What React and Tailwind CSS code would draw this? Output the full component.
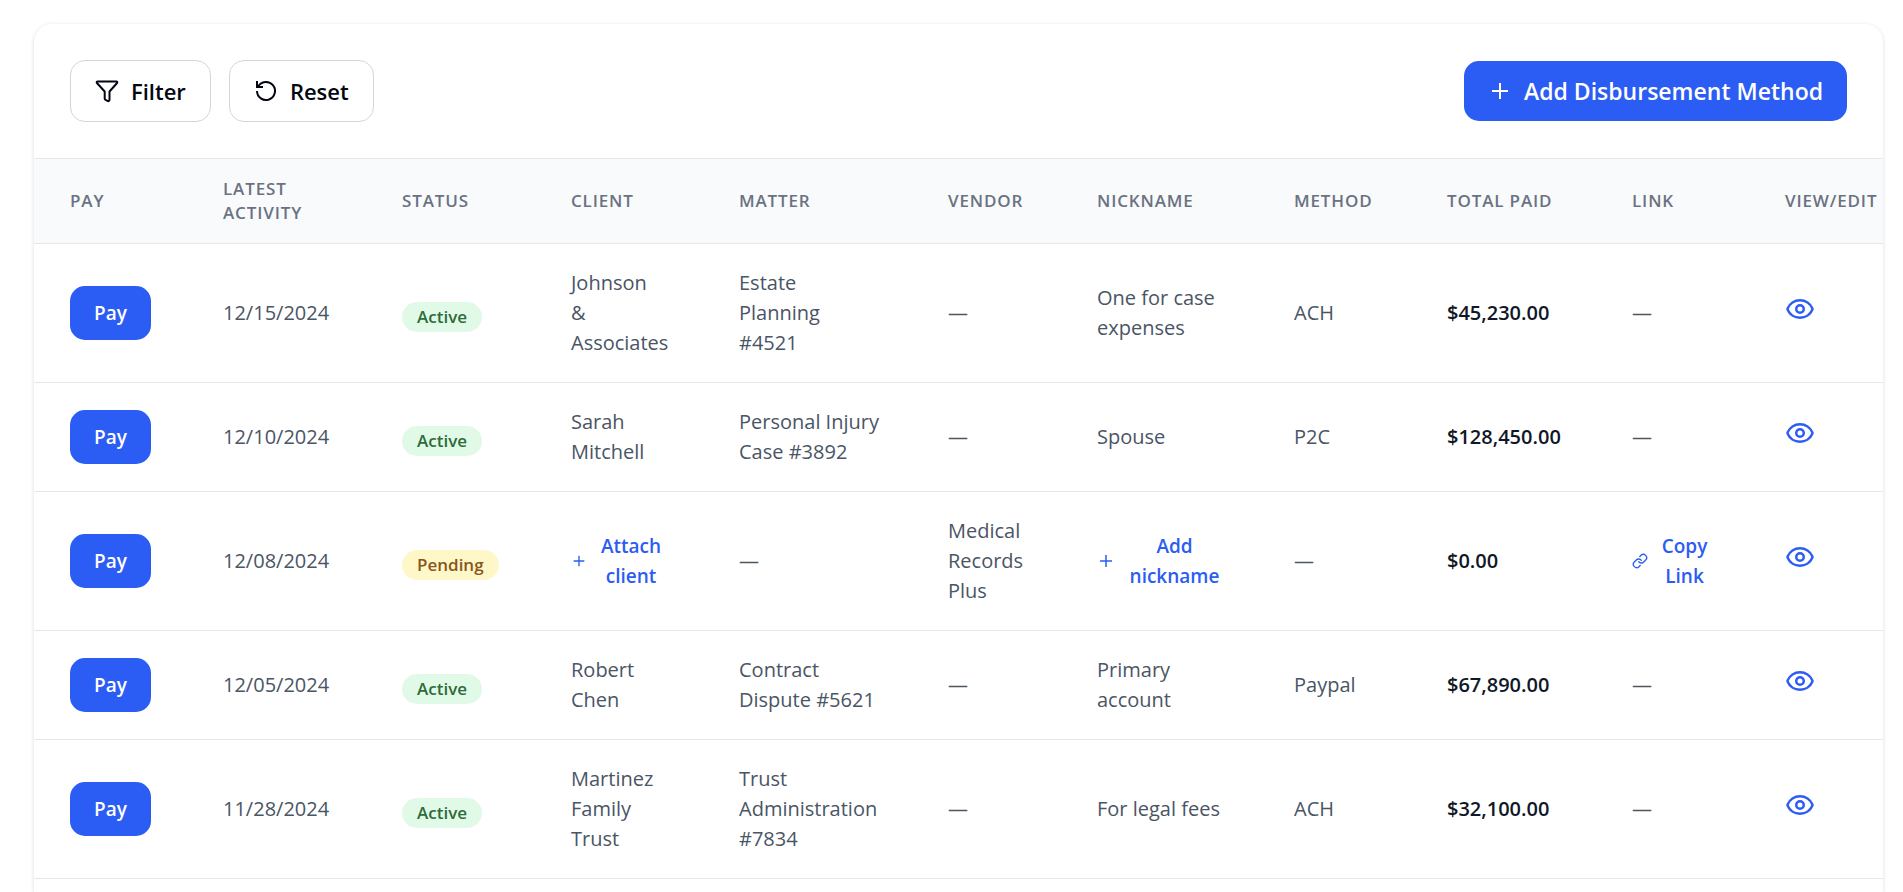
import React from "react";
import { Eye } from "lucide-react";

const PlusIcon = ({ className }) => (
  <svg viewBox="0 0 24 24" fill="none" stroke="currentColor" strokeWidth="2" className={className}>
    <path d="M12 4v16M4 12h16" />
  </svg>
);

const FilterIcon = () => (
  <svg viewBox="0 0 24 24" fill="none" stroke="currentColor" strokeWidth="2" strokeLinejoin="round" className="h-6 w-6">
    <path d="M2.6 2.5h18.8c.8 0 1.2.9.7 1.5L14.500 12.500v8.200a1.300 1.300 0 0 1-2 1.200l-2-1a1.500 1.500 0 0 1-.8-1.300v-7.100L1.900 4c-.5-.6-.1-1.500.7-1.500z" />
  </svg>
);

const ResetIcon = () => (
  <svg viewBox="0 0 24 24" fill="none" stroke="currentColor" strokeWidth="2" className="h-6 w-6">
    <path d="M3 2v6h6" />
    <path d="M4.200 7.500A9 9 0 1 1 3 12" />
  </svg>
);

const LinkIcon = ({ className }) => (
  <svg viewBox="0 0 24 24" fill="none" stroke="currentColor" strokeWidth="2" strokeLinecap="round" className={className}>
    <path d="M10 13a5 5 0 0 0 7.540.540l3-3a5 5 0 0 0-7.070-7.070l-1.720 1.710" />
    <path d="M14 11a5 5 0 0 0-7.540-.540l-3 3a5 5 0 0 0 7.070 7.070l1.710-1.710" />
  </svg>
);

const columns = [
  { label: "Pay", width: "w-[153px]" },
  { label: "Latest Activity", width: "w-[179px]" },
  { label: "Status", width: "w-[169px]" },
  { label: "Client", width: "w-[168px]" },
  { label: "Matter", width: "w-[209px]" },
  { label: "Vendor", width: "w-[149px]" },
  { label: "Nickname", width: "w-[197px]" },
  { label: "Method", width: "w-[153px]" },
  { label: "Total Paid", width: "w-[185px]" },
  { label: "Link", width: "w-[153px]" },
  { label: "View/Edit", width: "" },
];

const rows = [
  {
    date: "12/15/2024",
    status: "Active",
    client: "Johnson & Associates",
    matter: "Estate Planning #4521",
    nickname: "One for case expenses",
    method: "ACH",
    total: "$45,230.00",
  },
  {
    date: "12/10/2024",
    status: "Active",
    client: "Sarah Mitchell",
    matter: "Personal Injury Case #3892",
    nickname: "Spouse",
    method: "P2C",
    total: "$128,450.00",
  },
  {
    date: "12/08/2024",
    status: "Pending",
    vendor: "Medical Records Plus",
    total: "$0.00",
    canCopyLink: true,
  },
  {
    date: "12/05/2024",
    status: "Active",
    client: "Robert Chen",
    matter: "Contract Dispute #5621",
    nickname: "Primary account",
    method: "Paypal",
    total: "$67,890.00",
  },
  {
    date: "11/28/2024",
    status: "Active",
    client: "Martinez Family Trust",
    matter: "Trust Administration #7834",
    nickname: "For legal fees",
    method: "ACH",
    total: "$32,100.00",
  },
];

const StatusBadge = ({ status }) => (
  <span
    className={`inline-block rounded-full px-[15px] text-[17px] leading-[30px] font-semibold align-middle ${
      status === "Active"
        ? "bg-[#e1fae7] text-[#2e6b3a]"
        : "bg-[#fef8c8] text-[#89551b]"
    }`}
  >
    {status}
  </span>
);

const LinkButton = ({ icon, children }) => (
  <button className="flex items-center gap-3 text-[19px] font-semibold text-[#2b5cf3]">
    {icon}
    <span>{children}</span>
  </button>
);

const App = () => {
  return (
    <div
      className="flex min-h-screen flex-col bg-white pt-6 pr-5 pl-[34px]"
      style={{ fontFamily: '"Open Sans", sans-serif' }}
    >
      <div className="flex-1 overflow-hidden rounded-t-[18px] bg-white shadow-[0_1px_4px_rgba(0,0,0,0.14)]">
        {/* Toolbar */}
        <div className="flex items-center justify-between border-b border-gray-200 p-9">
          <div className="flex gap-[18px]">
            <button className="flex h-[62px] items-center gap-3 rounded-[15px] border border-gray-300 px-6 text-[22px] font-semibold text-gray-950">
              <FilterIcon />
              Filter
            </button>
            <button className="flex h-[62px] items-center gap-3 rounded-[15px] border border-gray-300 px-6 text-[22px] font-semibold text-gray-950">
              <ResetIcon />
              Reset
            </button>
          </div>
          <button className="flex h-[60px] items-center gap-3 rounded-[15px] bg-[#2b5cf3] px-6 text-[23px] font-semibold text-white">
            <PlusIcon className="h-6 w-6" />
            Add Disbursement Method
          </button>
        </div>

        {/* Table Content */}
        <div className="overflow-hidden">
          <table className="w-full min-w-[1885px] table-fixed text-left text-xl leading-[30px] text-gray-600">
            <thead className="bg-gray-50 text-[17px] leading-6 text-gray-500 uppercase">
              <tr className="border-b border-gray-200">
                {columns.map((col) => (
                  <th key={col.label} className={`${col.width} py-[18px] pr-6 pl-9 font-semibold tracking-wider`}>
                    {col.label}
                  </th>
                ))}
              </tr>
            </thead>
            <tbody>
              {rows.map((row) => (
                <tr key={row.date} className="border-b border-gray-200">
                  <td className="px-9">
                    <button className="h-[54px] rounded-[15px] bg-[#2b5cf3] px-6 text-[19px] font-semibold text-white">
                      Pay
                    </button>
                  </td>
                  <td className="px-9 py-6">{row.date}</td>
                  <td className="pt-[30px] pr-6 pb-6 pl-9">
                    <StatusBadge status={row.status} />
                  </td>
                  <td className="py-6 pr-10 pl-9">
                    {row.client || (
                      <LinkButton icon={<PlusIcon className="h-4 w-4 shrink-0" />}>
                        Attach client
                      </LinkButton>
                    )}
                  </td>
                  <td className="py-6 pr-8 pl-9">{row.matter || "—"}</td>
                  <td className="px-9 py-6">{row.vendor || "—"}</td>
                  <td className="px-9 py-6">
                    {row.nickname || (
                      <LinkButton icon={<PlusIcon className="h-[18px] w-[18px] shrink-0" />}>
                        Add nickname
                      </LinkButton>
                    )}
                  </td>
                  <td className="px-9 py-6">{row.method || "—"}</td>
                  <td className="px-9 py-6 font-semibold text-gray-900">{row.total}</td>
                  <td className="py-6 pr-10 pl-9">
                    {row.canCopyLink ? (
                      <LinkButton icon={<LinkIcon className="h-4 w-4 shrink-0" />}>
                        Copy Link
                      </LinkButton>
                    ) : (
                      "—"
                    )}
                  </td>
                  <td className="px-9">
                    <button aria-label="View or edit" className="block pb-2 text-[#2b5cf3]">
                      <Eye className="h-[30px] w-[30px]" />
                    </button>
                  </td>
                </tr>
              ))}
            </tbody>
          </table>
        </div>
      </div>
    </div>
  );
};

export default App;
